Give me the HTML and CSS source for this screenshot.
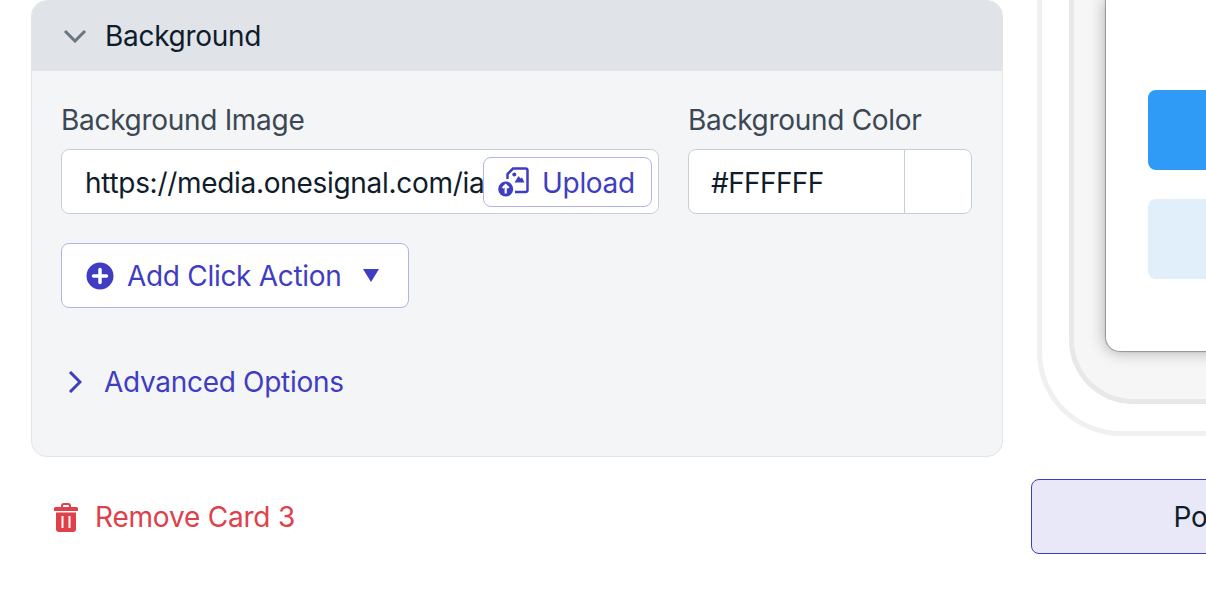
FILE: index.html
```html
<!DOCTYPE html>
<html lang="en">
<head>
	<meta charset="UTF-8">
	<title>Card editor</title>
	<link rel="stylesheet" href="styles.css">
</head>
<body>
	<div class="page">
		<div class="editor">
			<div class="card">
				<div class="card-head">
					<svg class="chevron" width="24" height="14" viewBox="0 0 24 14"><path d="M2 2l10 10L22 2" fill="none" stroke="#69767f" stroke-width="3"/></svg>
					<span>Background</span>
				</div>
				<div class="card-body">
					<div class="fields">
						<div class="field field-image">
							<label class="label">Background Image</label>
							<div class="input">
								<span class="input-text">https://media.onesignal.com/ia</span>
								<button class="upload">
									<svg width="32" height="32" viewBox="0 0 32 32">
										<path d="M9.500 13V8l5.500-5.500h12.500a2 2 0 0 1 2 2V24a2 2 0 0 1-2 2H17" fill="none" stroke="#3f3dc1" stroke-width="2.500"/>
										<circle cx="16.300" cy="8.500" r="2" fill="#3f3dc1"/>
										<path d="M16.500 16.500l4-6.500 2 2.500 1.500-1 2.500 5z" fill="#3f3dc1"/>
										<circle cx="7.700" cy="23" r="7.500" fill="#3f3dc1"/>
										<path d="M7.700 27.500v-8M4.700 22l3-3 3 3" fill="none" stroke="#fff" stroke-width="2.200"/>
									</svg>
									<span>Upload</span>
								</button>
							</div>
						</div>
						<div class="field field-color">
							<label class="label">Background Color</label>
							<div class="input">
								<span class="color-text">#FFFFFF</span>
								<span class="swatch"></span>
							</div>
						</div>
					</div>
					<button class="add-action">
						<svg width="28" height="28" viewBox="0 0 28 28"><circle cx="14" cy="14" r="13.500" fill="#3f3dc1"/><path d="M14 7.500v13M7.500 14h13" stroke="#fff" stroke-width="3.500" stroke-linecap="round"/></svg>
						<span>Add Click Action</span>
						<svg class="caret" width="16" height="13" viewBox="0 0 16 13"><path d="M0 0h16L8 13z" fill="#3f3dc1"/></svg>
					</button>
					<div class="advanced">
						<svg width="14" height="22" viewBox="0 0 14 22"><path d="M2 1l10 10L2 21" fill="none" stroke="#3f3dc1" stroke-width="3"/></svg>
						<span>Advanced Options</span>
					</div>
				</div>
			</div>
			<div class="remove">
				<svg width="24" height="29" viewBox="0 0 24 29"><path d="M8 4V3a2 2 0 0 1 2-2h4a2 2 0 0 1 2 2v1" fill="none" stroke="#e0404a" stroke-width="2"/><path d="M1.500 4h21A1.500 1.500 0 0 1 24 5.500V8H0V5.500A1.500 1.500 0 0 1 1.500 4z" fill="#e0404a"/><path d="M2 9.500h20V26a3 3 0 0 1-3 3H5a3 3 0 0 1-3-3z" fill="#e0404a"/><path d="M8.500 13v12M15.500 13v12" stroke="#fff" stroke-width="2"/></svg>
				<span>Remove Card 3</span>
			</div>
		</div>
		<div class="preview">
			<div class="ring">
				<div class="bezel">
					<div class="screen">
						<div class="screen-btn primary"></div>
						<div class="screen-btn secondary"></div>
					</div>
				</div>
			</div>
			<button class="position">Position</button>
		</div>
	</div>
</body>
</html>
```
FILE: styles.css
```css
* {
	box-sizing: border-box;
	margin: 0;
	padding: 0;
}
html, body {
	height: 596px;
	overflow: hidden;
	background: #fff;
}
body {
	font-family: Inter, "Liberation Sans", sans-serif;
	font-size: 28px;
	letter-spacing: -.3px;
	color: #0f1c2b;
}
button {
	font: inherit;
	letter-spacing: inherit;
	background: #fff;
	cursor: pointer;
}
.page {
	display: flex;
	width: 1206px;
	padding-left: 31px;
}
.editor {
	flex: 0 0 972px;
	min-width: 0;
}
.card {
	height: 457px;
	background: #f4f5f7;
	border: 1px solid #e1e4ea;
	border-radius: 16px;
	overflow: hidden;
}
.card-head {
	display: flex;
	align-items: center;
	gap: 18px;
	height: 70px;
	padding-left: 31px;
	background: #e0e3e8;
}
.card-body {
	padding: 32px 30px 0 29px;
}
.fields {
	display: flex;
	gap: 29px;
}
.field {
	min-width: 0;
}
.field-image {
	flex: 0 0 598px;
}
.field-color {
	flex: 0 0 284px;
}
.label {
	display: block;
	height: 46px;
	color: #3b4854;
	line-height: 34px;
}
.input {
	display: flex;
	align-items: center;
	height: 65px;
	background: #fff;
	border: 1px solid #c8ced6;
	border-radius: 8px;
	overflow: hidden;
}
.input-text {
	flex: 1;
	min-width: 0;
	padding: 2px 0 0 23px;
	white-space: nowrap;
	overflow: hidden;
}
.upload {
	flex: none;
	display: flex;
	align-items: center;
	gap: 12px;
	width: 169px;
	height: 50px;
	margin-right: 6px;
	padding-left: 14px;
	color: #3f3dc1;
	border: 1px solid #b3b2ee;
	border-radius: 8px;
}
.upload span {
	padding-top: 2px;
}
.color-text {
	flex: 0 0 215px;
	padding: 2px 0 0 22px;
	letter-spacing: -.6px;
}
.swatch {
	height: 100%;
	flex: 1;
	border-left: 1px solid #c8ced6;
}
.add-action {
	display: flex;
	align-items: center;
	width: 348px;
	height: 65px;
	margin-top: 29px;
	padding-left: 24px;
	color: #3f3dc1;
	border: 1px solid #b3b2ee;
	border-radius: 8px;
}
.add-action span {
	margin-left: 13px;
}
.caret {
	margin-left: 21px;
}
.advanced {
	display: flex;
	align-items: center;
	gap: 22px;
	margin-top: 57px;
	padding-left: 7px;
	color: #3f3dc1;
}
.remove {
	display: flex;
	align-items: center;
	gap: 17px;
	margin-top: 43px;
	padding-left: 23px;
	letter-spacing: -.2px;
	color: #e0404a;
}
.preview {
	flex: none;
	width: 400px;
	margin-left: 28px;
}
.ring {
	height: 436px;
	margin-left: 6px;
	padding: 0 0 27px 27px;
	border-left: 5px solid #f0f0f0;
	border-bottom: 5px solid #f0f0f0;
	border-bottom-left-radius: 84px;
}
.bezel {
	height: 100%;
	padding: 0 0 48px 32px;
	background: #f6f6f6;
	border-left: 5px solid #e8e8e8;
	border-bottom: 5px solid #e8e8e8;
	border-bottom-left-radius: 64px;
}
.screen {
	height: 100%;
	padding: 90px 0 0 42px;
	background: #fff;
	border-bottom-left-radius: 14px;
	box-shadow: 0 0 16px 1px rgba(0, 0, 0, .3), 0 0 1px 1px rgba(0, 0, 0, .3);
}
.screen-btn {
	height: 80px;
	border-radius: 8px 0 0 8px;
}
.primary {
	background: #2f9bf7;
}
.secondary {
	margin-top: 29px;
	background: #e1effb;
}
.position {
	display: block;
	width: 388px;
	height: 75px;
	margin-top: 43px;
	color: #0f1c2b;
	background: #e9e8f8;
	border: 1px solid #3f3dc1;
	border-radius: 8px;
}
```
